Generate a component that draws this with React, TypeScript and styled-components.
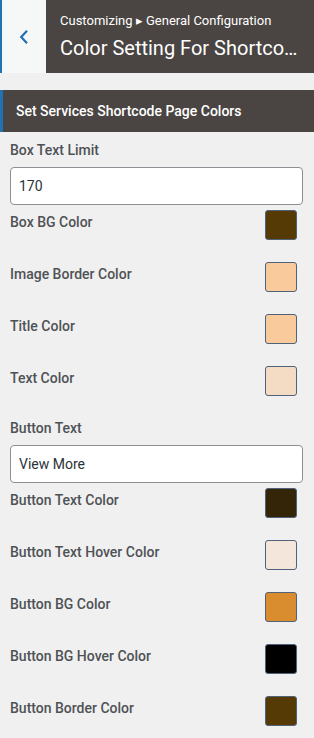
import React from "react";
import styled, { createGlobalStyle } from "styled-components";

const GlobalStyle = createGlobalStyle`
  body {
    margin: 0;
    background: #f0f0f1;
    font-family: Roboto, "Liberation Sans", sans-serif;
  }
`;

const Panel = styled.div`
  width: 314px;
  min-height: 738px;
  background: #f0f0f1;
`;

const Header = styled.div`
  display: flex;
  height: 73px;
`;

const BackButton = styled.button`
  width: 46px;
  flex-shrink: 0;
  border: none;
  border-left: 2px solid #2271b1;
  background: #f6f7f7;
  display: flex;
  align-items: center;
  justify-content: center;
  padding: 0;
  color: #2271b1;
`;

const HeaderTitle = styled.div`
  flex: 1;
  min-width: 0;
  background: #4a4542;
  color: #ffffff;
  padding: 12px 14px 0 14px;
`;

const Crumb = styled.div`
  font-size: 13px;
  line-height: 18px;
  white-space: nowrap;
`;

const Title = styled.div`
  font-size: 20px;
  line-height: 28px;
  margin-top: 4px;
  white-space: nowrap;
`;

const SectionBar = styled.div`
  margin-top: 17px;
  height: 42px;
  background: #4a4542;
  border-left: 3px solid #2271b1;
  color: #ffffff;
  font-size: 14px;
  font-weight: 500;
  display: flex;
  align-items: center;
  padding-left: 13px;
`;

const Content = styled.div`
  padding: 8px 11px 0 10px;
`;

const Label = styled.div`
  font-size: 14px;
  font-weight: 500;
  line-height: 20px;
  color: #4f5255;
`;

const TextField = styled.div`
  display: flex;
  flex-direction: column;
  gap: 7px;
  margin-bottom: 5px;
`;

const Input = styled.input`
  box-sizing: border-box;
  height: 38px;
  width: 100%;
  border: 1px solid #8c8f94;
  border-radius: 4px;
  background: #ffffff;
  padding: 0 8px;
  font-family: Roboto, "Liberation Sans", sans-serif;
  font-size: 14px;
  color: #2c3338;
`;

const ColorRow = styled.div`
  display: flex;
  justify-content: space-between;
  align-items: flex-start;
  height: 52px;
  padding-top: 2px;
  box-sizing: border-box;
`;

const Swatch = styled.span<{ color: string }>`
  width: 32px;
  height: 30px;
  box-sizing: border-box;
  margin-top: -2px;
  margin-right: 6px;
  border: 1px solid #50617a;
  border-radius: 3px;
  background: ${(p) => p.color};
`;

const BackIcon = () => (
  <svg width="12" height="16" viewBox="0 0 12 16">
    <path d="M9 1.8 L3.2 8 L9 14.2" fill="none" stroke="currentColor" strokeWidth="2.2" />
  </svg>
);

const colorsA = [
  { label: "Box BG Color", color: "#553a06" },
  { label: "Image Border Color", color: "#f9cb9c" },
  { label: "Title Color", color: "#f9cb9c" },
  { label: "Text Color", color: "#f4dbc3" },
];

const colorsB = [
  { label: "Button Text Color", color: "#352508" },
  { label: "Button Text Hover Color", color: "#f5e6dc" },
  { label: "Button BG Color", color: "#d98d2e" },
  { label: "Button BG Hover Color", color: "#000000" },
  { label: "Button Border Color", color: "#553a06" },
];

const App: React.FC = () => {
  return (
    <Panel>
      <GlobalStyle />
      <Header>
        <BackButton>
          <BackIcon />
        </BackButton>
        <HeaderTitle>
          <Crumb>Customizing ▸ General Configuration</Crumb>
          <Title>Color Setting For Shortco…</Title>
        </HeaderTitle>
      </Header>
      <SectionBar>Set Services Shortcode Page Colors</SectionBar>
      <Content>
        <TextField>
          <Label>Box Text Limit</Label>
          <Input defaultValue="170" />
        </TextField>
        {colorsA.map((c) => (
          <ColorRow key={c.label}>
            <Label>{c.label}</Label>
            <Swatch color={c.color} />
          </ColorRow>
        ))}
        <TextField>
          <Label>Button Text</Label>
          <Input defaultValue="View More" />
        </TextField>
        {colorsB.map((c) => (
          <ColorRow key={c.label}>
            <Label>{c.label}</Label>
            <Swatch color={c.color} />
          </ColorRow>
        ))}
      </Content>
    </Panel>
  );
};

export default App;
